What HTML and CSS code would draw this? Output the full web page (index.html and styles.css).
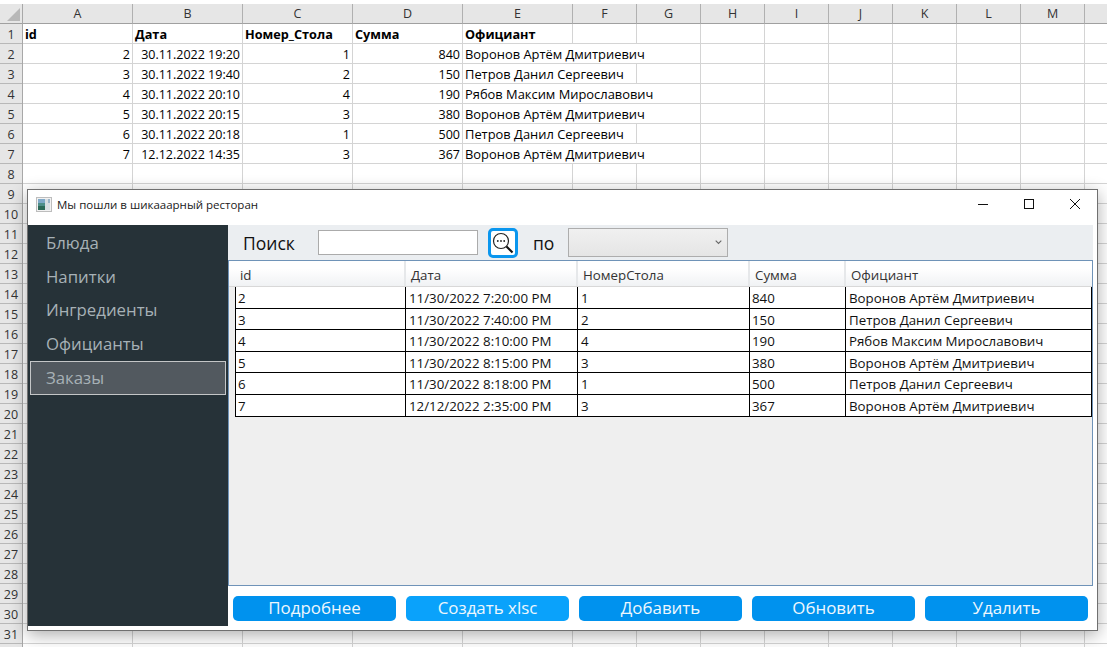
FILE: index.html
```html
<!DOCTYPE html>
<html lang="ru">
<head>
<meta charset="utf-8">
<title>Мы пошли в шикааарный ресторан</title>
<link rel="stylesheet" href="styles.css">
</head>
<body>
<div class="sheet">
  <div class="rowhead">
    <div class="corner"><span class="tri"></span></div>
    <div class="rn">1</div><div class="rn">2</div><div class="rn">3</div><div class="rn">4</div><div class="rn">5</div><div class="rn">6</div><div class="rn">7</div><div class="rn">8</div><div class="rn">9</div><div class="rn">10</div><div class="rn">11</div><div class="rn">12</div><div class="rn">13</div><div class="rn">14</div><div class="rn">15</div><div class="rn">16</div><div class="rn">17</div><div class="rn">18</div><div class="rn">19</div><div class="rn">20</div><div class="rn">21</div><div class="rn">22</div><div class="rn">23</div><div class="rn">24</div><div class="rn">25</div><div class="rn">26</div><div class="rn">27</div><div class="rn">28</div><div class="rn">29</div><div class="rn">30</div><div class="rn">31</div>
  </div>
  <div class="col wide"><div class="ch">A</div><div class="c b">id</div><div class="c r">2</div><div class="c r">3</div><div class="c r">4</div><div class="c r">5</div><div class="c r">6</div><div class="c r">7</div></div>
  <div class="col wide"><div class="ch">B</div><div class="c b">Дата</div><div class="c r">30.11.2022 19:20</div><div class="c r">30.11.2022 19:40</div><div class="c r">30.11.2022 20:10</div><div class="c r">30.11.2022 20:15</div><div class="c r">30.11.2022 20:18</div><div class="c r">12.12.2022 14:35</div></div>
  <div class="col wide"><div class="ch">C</div><div class="c b">Номер_Стола</div><div class="c r">1</div><div class="c r">2</div><div class="c r">4</div><div class="c r">3</div><div class="c r">1</div><div class="c r">3</div></div>
  <div class="col wide"><div class="ch">D</div><div class="c b">Сумма</div><div class="c r">840</div><div class="c r">150</div><div class="c r">190</div><div class="c r">380</div><div class="c r">500</div><div class="c r">367</div></div>
  <div class="col wide front"><div class="ch">E</div><div class="c b">Официант</div><div class="c"><span class="over">Воронов Артём Дмитриевич</span></div><div class="c"><span class="over">Петров Данил Сергеевич</span></div><div class="c"><span class="over">Рябов Максим Мирославович</span></div><div class="c"><span class="over">Воронов Артём Дмитриевич</span></div><div class="c"><span class="over">Петров Данил Сергеевич</span></div><div class="c"><span class="over">Воронов Артём Дмитриевич</span></div></div>
  <div class="col"><div class="ch">F</div></div>
  <div class="col"><div class="ch">G</div></div>
  <div class="col"><div class="ch">H</div></div>
  <div class="col"><div class="ch">I</div></div>
  <div class="col"><div class="ch">J</div></div>
  <div class="col"><div class="ch">K</div></div>
  <div class="col"><div class="ch">L</div></div>
  <div class="col"><div class="ch">M</div></div>
  <div class="col last"><div class="ch"></div></div>
</div>

<div class="window">
  <div class="titlebar">
    <svg class="appicon" width="16" height="15" viewBox="0 0 16 15"><rect x=".5" y=".5" width="15" height="14" fill="#f2f2f2" stroke="#bdbdbd"/><rect x="2" y="2" width="7" height="11" fill="#4f8f8a"/><rect x="2" y="2" width="7" height="4" fill="#7fa9c8"/><rect x="2" y="9" width="7" height="4" fill="#2d6a58"/><rect x="9" y="2" width="5" height="11" fill="#d9dee2"/><rect x="12" y="2" width="2" height="4" fill="#9db5c8"/></svg>
    <span class="wtitle">Мы пошли в шикааарный ресторан</span>
    <div class="wctrls">
      <svg width="46" height="30" viewBox="0 0 46 30"><path d="M19 14.5h10" stroke="#111" fill="none"/></svg>
      <svg width="46" height="30" viewBox="0 0 46 30"><rect x="19.5" y="9.5" width="9" height="9" stroke="#111" fill="none"/></svg>
      <svg width="46" height="30" viewBox="0 0 46 30"><path d="M19 9l10 10M29 9l-10 10" stroke="#111" fill="none"/></svg>
    </div>
  </div>
  <div class="wbody">
    <nav class="side">
      <div class="item">Блюда</div>
      <div class="item">Напитки</div>
      <div class="item">Ингредиенты</div>
      <div class="item">Официанты</div>
      <div class="item sel">Заказы</div>
    </nav>
    <main class="main">
      <div class="toolbar">
        <span class="lbl lbl-search">Поиск</span>
        <div class="input"></div>
        <div class="sbtn">
          <svg width="24" height="24" viewBox="0 0 24 24"><circle cx="10" cy="10" r="7.5" fill="#fff" stroke="#222" stroke-width="1.2"/><path d="M15.5 15.5l6 6" stroke="#111" stroke-width="2.2" fill="none"/><circle cx="6.8" cy="10" r=".9" fill="#222"/><circle cx="10" cy="10" r=".9" fill="#222"/><circle cx="13.2" cy="10" r=".9" fill="#222"/></svg>
        </div>
        <span class="lbl lbl-po">по</span>
        <div class="combo"><svg width="7" height="5" viewBox="0 0 7 5"><path d="M.7 .7l2.8 2.8 2.8-2.8" stroke="#666" stroke-width="1.1" fill="none"/></svg></div>
      </div>
      <div class="grid">
        <div class="ghead">
          <div class="gh g1">id</div><div class="gh g2">Дата</div><div class="gh g3">НомерСтола</div><div class="gh g4">Сумма</div><div class="gh g5">Официант</div>
        </div>
        <div class="grow"><div class="gc g1">2</div><div class="gc g2">11/30/2022 7:20:00 PM</div><div class="gc g3">1</div><div class="gc g4">840</div><div class="gc g5">Воронов Артём Дмитриевич</div></div>
        <div class="grow"><div class="gc g1">3</div><div class="gc g2">11/30/2022 7:40:00 PM</div><div class="gc g3">2</div><div class="gc g4">150</div><div class="gc g5">Петров Данил Сергеевич</div></div>
        <div class="grow"><div class="gc g1">4</div><div class="gc g2">11/30/2022 8:10:00 PM</div><div class="gc g3">4</div><div class="gc g4">190</div><div class="gc g5">Рябов Максим Мирославович</div></div>
        <div class="grow"><div class="gc g1">5</div><div class="gc g2">11/30/2022 8:15:00 PM</div><div class="gc g3">3</div><div class="gc g4">380</div><div class="gc g5">Воронов Артём Дмитриевич</div></div>
        <div class="grow"><div class="gc g1">6</div><div class="gc g2">11/30/2022 8:18:00 PM</div><div class="gc g3">1</div><div class="gc g4">500</div><div class="gc g5">Петров Данил Сергеевич</div></div>
        <div class="grow"><div class="gc g1">7</div><div class="gc g2">12/12/2022 2:35:00 PM</div><div class="gc g3">3</div><div class="gc g4">367</div><div class="gc g5">Воронов Артём Дмитриевич</div></div>
      </div>
      <div class="actions">
        <div class="btn">Подробнее</div>
        <div class="btn hover">Создать xlsc</div>
        <div class="btn">Добавить</div>
        <div class="btn">Обновить</div>
        <div class="btn">Удалить</div>
      </div>
    </main>
  </div>
</div>
</body>
</html>
```

FILE: styles.css
```css
* { box-sizing: border-box; }
html, body { margin: 0; height: 100%; overflow: hidden; background: #fff; }
body { position: relative; font-family: "Open Sans", "Liberation Sans", sans-serif; }

/* spreadsheet */
.sheet { display: flex; height: 647px; padding-top: 4px; font-size: 12.5px; color: #000; }
.rowhead { width: 23px; flex: none; background: #e6e6e6; border-right: 1px solid #a8a8a8; }
.corner { height: 20px; border-bottom: 1px solid #a0a0a0; position: relative; }
.tri { position: absolute; right: 2px; bottom: 2px; border-style: solid; border-width: 0 0 13px 13px; border-color: transparent transparent #b8b8b8 transparent; }
.rn { height: 20px; border-bottom: 1px solid #b8b8b8; text-align: center; line-height: 21px; font-size: 12.5px; color: #333; }
.col { flex: none; width: 64px; border-right: 1px solid #d4d4d4; background: repeating-linear-gradient(to bottom, #fff 0, #fff 19px, #d4d4d4 19px, #d4d4d4 20px) 0 20px / 100% 100% no-repeat; }
.col.wide { width: 110px; }
.col.last { flex: 1; border-right: 0; }
.col.front { z-index: 1; }
.ch { height: 20px; background: #e6e6e6; border-right: 1px solid #b0b0b0; margin-right: -1px; border-bottom: 1px solid #a0a0a0; text-align: center; line-height: 19px; font-size: 12.5px; color: #333; }
.c { height: 20px; line-height: 21px; padding: 0 2px; white-space: nowrap; }
.c.b { font-weight: 700; font-size: 12.7px; }
.c.r { text-align: right; }
.over { display: inline-block; height: 19px; line-height: 21px; font-size: 12.9px; background: #fff; vertical-align: top; padding-right: 1px; }

/* window */
.window { position: absolute; z-index: 2; left: 27px; top: 189px; width: 1071px; height: 442px; background: #fff; border: 1px solid #707070; box-shadow: 0 4px 16px rgba(0, 0, 0, .32); display: flex; flex-direction: column; }
.titlebar { height: 35px; flex: none; display: flex; align-items: flex-start; padding: 7px 0 0 8px; }
.appicon { flex: none; }
.wtitle { margin-left: 5px; font-size: 11.5px; line-height: 16px; color: #1a1a1a; }
.wctrls { margin-left: auto; display: flex; margin-top: -7px; }
.wctrls svg { display: block; }
.wbody { height: 401px; display: flex; }

.side { width: 200px; flex: none; background: #263238; padding: 0 2px; font-size: 16.8px; color: #a7b1b6; }
.item { height: 33.6px; line-height: 33px; padding-left: 15px; border: 1px solid transparent; }
.item.sel { background: #52595f; border-color: #c4c6c7; height: 34px; line-height: 31px; margin-top: 2px; }

.main { width: 865px; flex: none; display: flex; flex-direction: column; }
.toolbar { height: 35px; flex: none; background: #ebeef1; display: flex; align-items: center; }
.lbl { font-size: 17.5px; color: #111; }
.lbl-search { margin-left: 15px; width: 75px; }
.input { width: 160px; height: 25px; background: #fff; border: 1px solid #ababab; }
.sbtn { width: 30px; height: 30px; margin-left: 10px; background: #fff; border: 3px solid #0a96ee; border-radius: 5px; display: flex; align-items: center; justify-content: center; }
.lbl-po { margin-left: 15px; width: 35px; }
.combo { width: 160px; height: 29px; border: 1px solid #adadad; background: linear-gradient(#f0f0f0, #e5e5e5); display: flex; align-items: center; justify-content: flex-end; padding-right: 5px; }

.grid { height: 326px; flex: none; width: 865px; border: 1px solid #6f93b8; background: #efefef; }
.ghead { height: 26px; display: flex; background: linear-gradient(#fff 0, #fff 30%, #f0f2f4 100%); border-bottom: 1px solid #d8d8d8; padding-left: 6px; }
.gh { font-size: 13.3px; color: #333; padding-left: 5px; line-height: 28px; border-right: 2px solid #e6e8ea; }
.grow { height: 21.6px; display: flex; margin-left: 6px; background: #fff; border-bottom: 1px solid #000; width: 857px; }
.gc { font-size: 13.3px; color: #111; padding-left: 3px; line-height: 22px; border-right: 1px solid #000; white-space: nowrap; }
.g1 { width: 171px; }
.gc.g1 { border-left: 1px solid #000; padding-left: 2px; }
.gc.g4 { padding-left: 2px; }
.g2 { width: 172px; }
.g3 { width: 172px; }
.g4 { width: 96px; }
.g5 { width: 246px; }
.gh.g5 { border-right: 0; }

.actions { flex: 1; display: flex; gap: 10px; padding: 10px 0 0 5px; }
.btn { width: 163px; height: 25px; border-radius: 5px; background: #0092ee; color: #eef7fd; font-size: 16.9px; line-height: 24px; text-align: center; }
.btn.hover { background: #0aa2fb; }
```
